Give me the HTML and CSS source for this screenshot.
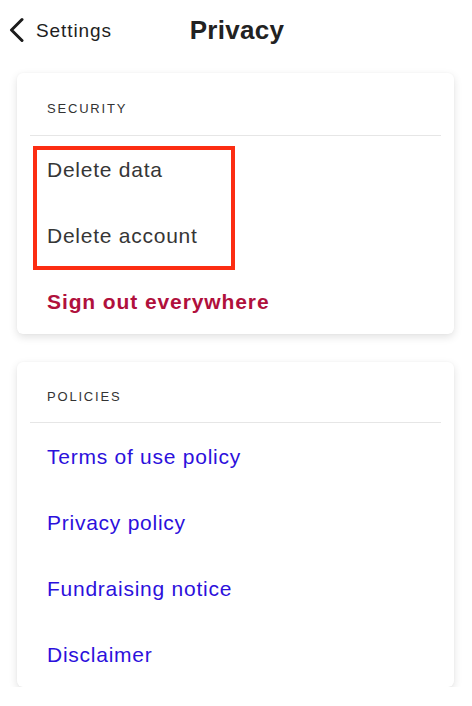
FILE: index.html
```html
<!DOCTYPE html>
<html lang="en">
<head>
<meta charset="utf-8">
<title>Privacy</title>
<link rel="stylesheet" href="styles.css">
</head>
<body>
  <header class="topbar">
    <a class="back" href="#">
      <svg class="chev" width="16" height="26" viewBox="0 0 16 26" aria-hidden="true">
        <path d="M14 2.5 L3.5 13 L14 23.5" fill="none" stroke="#1c1c1c" stroke-width="3" stroke-linecap="round" stroke-linejoin="round"/>
      </svg>
      <span class="back-label">Settings</span>
    </a>
    <h1 class="title">Privacy</h1>
    <span class="spacer"></span>
  </header>

  <section class="card">
    <div class="card-head">SECURITY</div>
    <div class="highlight">
      <div class="row">Delete data</div>
      <div class="row">Delete account</div>
    </div>
    <div class="row row-danger">Sign out everywhere</div>
  </section>

  <section class="card card-second">
    <div class="card-head">POLICIES</div>
    <div class="row row-link">Terms of use policy</div>
    <div class="row row-link">Privacy policy</div>
    <div class="row row-link">Fundraising notice</div>
    <div class="row row-link">Disclaimer</div>
  </section>
</body>
</html>
```

FILE: styles.css
```css
html, body {
  margin: 0;
  padding: 0;
  background: #ffffff;
}

body {
  font-family: "Liberation Sans", Arial, Helvetica, sans-serif;
  color: #333333;
  width: 472px;
}

.topbar {
  display: grid;
  grid-template-columns: 1fr auto 1fr;
  align-items: center;
  padding: 15px 0 0 8px;
  height: 30px;
}

.back {
  display: flex;
  align-items: center;
  gap: 12px;
  text-decoration: none;
  color: #1e1e1e;
}

.chev {
  display: block;
}

.back-label {
  font-size: 19px;
  line-height: 22px;
  letter-spacing: 0.9px;
  position: relative;
  top: 1px;
}

.title {
  margin: 0;
  font-size: 26px;
  line-height: 30px;
  font-weight: 700;
  letter-spacing: 0.3px;
  color: #222222;
  position: relative;
  left: -3px;
}

.card {
  margin: 28px 18px 0 17px;
  background: #ffffff;
  border-radius: 6px;
  box-shadow: 0 3px 9px rgba(0, 0, 0, 0.12), 0 0 2px rgba(0, 0, 0, 0.04);
}

.card-second {
  margin-top: 28px;
}

.card-head {
  margin: 0 13px;
  padding: 28px 17px 18px;
  font-size: 13px;
  line-height: 16px;
  letter-spacing: 1.8px;
  color: #333333;
  border-bottom: 1px solid #e6e6e6;
}

.card-second .card-head {
  padding-top: 27px;
  padding-bottom: 17px;
}

.row {
  padding: 22px 30px 20px;
  font-size: 21px;
  line-height: 24px;
  letter-spacing: 0.75px;
  color: #363636;
}

.row-danger {
  color: #b0103c;
  font-weight: 700;
  letter-spacing: 0.9px;
}

.row-link {
  color: #2c10dc;
}

.highlight {
  position: relative;
}

.highlight::after {
  content: "";
  position: absolute;
  top: 10px;
  left: 16px;
  width: 202px;
  height: 124px;
  box-sizing: border-box;
  border: 4px solid #fc2d12;
  pointer-events: none;
}
```
